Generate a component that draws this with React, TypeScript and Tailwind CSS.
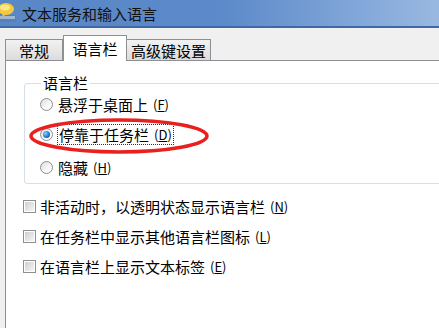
import React from 'react';

const font = { fontFamily: '"Noto Sans CJK SC", "Microsoft YaHei", sans-serif' };

const Radio = ({ checked }: { checked?: boolean }) => (
  <span className="relative flex h-[13px] w-[13px] shrink-0 items-center justify-center rounded-full border border-[#8e8f8f] bg-gradient-to-br from-[#dcdcdc] via-[#f4f4f4] to-[#ffffff]">
    {checked && (
      <span className="h-[7px] w-[7px] rounded-full bg-[radial-gradient(circle_at_35%_35%,#8fd0ff,#1f78d1_55%,#0d4a94)]" />
    )}
  </span>
);

const Checkbox = () => (
  <span className="flex h-[13px] w-[13px] shrink-0 items-center justify-center border border-[#8e8f8f] bg-white">
    <span className="h-[9px] w-[9px] bg-gradient-to-br from-[#cfcfcf] to-[#f6f6f6]" />
  </span>
);

const Key = ({ k }: { k: string }) => (
  <span className="ml-[5px] text-[13px]">
    (<span className="underline">{k}</span>)
  </span>
);

export default function App() {
  return (
    <div className="relative flex h-[328px] w-[439px] flex-col overflow-hidden bg-[#f0f0f0] text-[15px] text-black" style={font}>
      {/* title bar */}
      <div className="flex h-[28px] shrink-0 items-center border-b-2 border-[#3f69a6] bg-gradient-to-r from-[#5a87c6] via-[#5b89c9] to-[#99b8e1]">
        <svg width="22" height="22" viewBox="0 0 22 22" className="-ml-[2px] shrink-0">
          <rect x="0" y="13" width="18" height="7" rx="1" fill="#5c7fae" />
          <rect x="0" y="14" width="17" height="3" fill="#9bb7d9" />
          <ellipse cx="8" cy="7" rx="8" ry="6" fill="#f6c93a" />
          <ellipse cx="7" cy="5.5" rx="5" ry="3" fill="#fde98b" />
          <path d="M5 11 L4 15 L9 12 Z" fill="#f6c93a" />
        </svg>
        <span className="ml-[2px] leading-none text-[#111]">文本服务和输入语言</span>
      </div>

      {/* tabs */}
      <div className="flex shrink-0 items-end pl-[5px] pt-[7px]">
        <div className="flex h-[21px] w-[58px] items-center justify-center border border-b-0 border-[#8d8f94] bg-gradient-to-b from-[#f2f2f2] to-[#dcdcdc] leading-none">
          常规
        </div>
        <div className="relative z-10 -mb-px flex h-[26px] w-[64px] items-center justify-center border border-b-0 border-[#8d8f94] bg-white leading-none">
          语言栏
        </div>
        <div className="flex h-[21px] w-[84px] items-center justify-center border border-b-0 border-l-0 border-[#8d8f94] bg-gradient-to-b from-[#f2f2f2] to-[#dcdcdc] leading-none">
          高级键设置
        </div>
      </div>

      {/* panel */}
      <div className="ml-[5px] flex-1 border-l border-t border-[#8d8f94] bg-white pl-[18px] pt-[12px]">
        <fieldset className="w-[440px] rounded-[3px] border border-[#d5dfe5] pb-[5px] pl-[15px]">
          <legend className="ml-[1px] px-[2px] leading-[20px]">语言栏</legend>
          <div className="flex h-[22px] items-center">
            <Radio />
            <span className="ml-[5px] flex items-center leading-none">
              悬浮于桌面上<Key k="F" />
            </span>
          </div>
          <div className="mt-[8px] flex h-[22px] items-center">
            <Radio checked />
            <span className="ml-[4px] flex items-center border border-dotted border-[#333] px-px py-[2px] leading-none">
              停靠于任务栏<Key k="D" />
            </span>
          </div>
          <div className="mt-[11px] flex h-[22px] items-center">
            <Radio />
            <span className="ml-[5px] flex items-center leading-none">
              隐藏<Key k="H" />
            </span>
          </div>
        </fieldset>

        <div className="-ml-px mt-[11px] flex flex-col gap-[8px]">
          <div className="flex h-[22px] items-center">
            <Checkbox />
            <span className="ml-[4px] flex items-center leading-none">
              非活动时，以透明状态显示语言栏<Key k="N" />
            </span>
          </div>
          <div className="flex h-[22px] items-center">
            <Checkbox />
            <span className="ml-[4px] flex items-center leading-none">
              在任务栏中显示其他语言栏图标<Key k="L" />
            </span>
          </div>
          <div className="flex h-[22px] items-center">
            <Checkbox />
            <span className="ml-[4px] flex items-center leading-none">
              在语言栏上显示文本标签<Key k="E" />
            </span>
          </div>
        </div>
      </div>

      {/* red annotation ellipse */}
      <svg className="pointer-events-none absolute left-[28px] top-[117px]" width="182" height="38" viewBox="0 0 182 38">
        <ellipse cx="91" cy="19" rx="88" ry="16" fill="none" stroke="#e8211e" strokeWidth="3.5" />
      </svg>
    </div>
  );
}
